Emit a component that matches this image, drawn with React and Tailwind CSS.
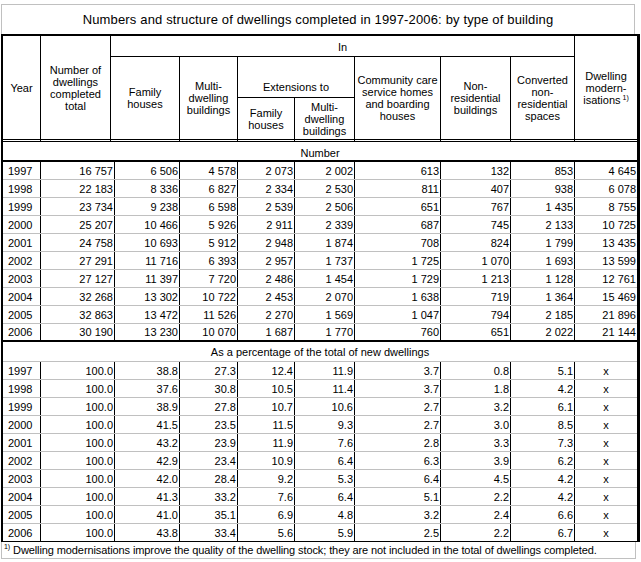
import React from "react";

const numbers = [
  ["1997", "16 757", "6 506", "4 578", "2 073", "2 002", "613", "132", "853", "4 645"],
  ["1998", "22 183", "8 336", "6 827", "2 334", "2 530", "811", "407", "938", "6 078"],
  ["1999", "23 734", "9 238", "6 598", "2 539", "2 506", "651", "767", "1 435", "8 755"],
  ["2000", "25 207", "10 466", "5 926", "2 911", "2 339", "687", "745", "2 133", "10 725"],
  ["2001", "24 758", "10 693", "5 912", "2 948", "1 874", "708", "824", "1 799", "13 435"],
  ["2002", "27 291", "11 716", "6 393", "2 957", "1 737", "1 725", "1 070", "1 693", "13 599"],
  ["2003", "27 127", "11 397", "7 720", "2 486", "1 454", "1 729", "1 213", "1 128", "12 761"],
  ["2004", "32 268", "13 302", "10 722", "2 453", "2 070", "1 638", "719", "1 364", "15 469"],
  ["2005", "32 863", "13 472", "11 526", "2 270", "1 569", "1 047", "794", "2 185", "21 896"],
  ["2006", "30 190", "13 230", "10 070", "1 687", "1 770", "760", "651", "2 022", "21 144"],
];

const percents = [
  ["1997", "100.0", "38.8", "27.3", "12.4", "11.9", "3.7", "0.8", "5.1", "x"],
  ["1998", "100.0", "37.6", "30.8", "10.5", "11.4", "3.7", "1.8", "4.2", "x"],
  ["1999", "100.0", "38.9", "27.8", "10.7", "10.6", "2.7", "3.2", "6.1", "x"],
  ["2000", "100.0", "41.5", "23.5", "11.5", "9.3", "2.7", "3.0", "8.5", "x"],
  ["2001", "100.0", "43.2", "23.9", "11.9", "7.6", "2.8", "3.3", "7.3", "x"],
  ["2002", "100.0", "42.9", "23.4", "10.9", "6.4", "6.3", "3.9", "6.2", "x"],
  ["2003", "100.0", "42.0", "28.4", "9.2", "5.3", "6.4", "4.5", "4.2", "x"],
  ["2004", "100.0", "41.3", "33.2", "7.6", "6.4", "5.1", "2.2", "4.2", "x"],
  ["2005", "100.0", "41.0", "35.1", "6.9", "4.8", "3.2", "2.4", "6.6", "x"],
  ["2006", "100.0", "43.8", "33.4", "5.6", "5.9", "2.5", "2.2", "6.7", "x"],
];

// header columns and data columns (the data grid's second rule sits 4px further right)
const headCols = "grid grid-cols-[38px_70px_69px_58px_57px_60px_86px_70px_64px_62px]";
const dataCols = "grid grid-cols-[38px_74px_65px_58px_57px_60px_86px_70px_64px_62px]";

const hd = "flex items-center justify-center text-center leading-[12px] border-black border-r";
const hdBottom = "border-double border-b-[3px]";

const DataRow = ({ row, last, pct }) => (
  <div
    className={`${dataCols} h-[18px] ${
      last ? (pct ? "border-b border-black" : "border-b-2 border-black") : "border-b border-[#c0c0c0]"
    }`}
  >
    {row.map((v, i) => (
      <div
        key={i}
        className={`flex items-end pb-[1px] leading-[13px] ${
          i === 0 ? "pl-[5px]" : i === 9 && pct ? "justify-center" : "justify-end pr-[1px]"
        } ${i < 9 ? "border-r border-black" : ""}`}
      >
        {v}
      </div>
    ))}
  </div>
);

export default function App() {
  return (
    <div className="w-[641px] h-[562px] bg-white text-black font-['Liberation_Sans',Arial,sans-serif] text-[11px] pt-[4px]">
      {/* Title */}
      <div className="ml-[1px] w-[634px] h-[30px] border-t border-x border-[#c0c0c0] flex items-center justify-center pt-[1px] text-[13px] tracking-[0.15px]">
        Numbers and structure of dwellings completed in 1997-2006: by type of building
      </div>

      <div className="ml-[1px] w-[639px] border-t-2 border-l-2 border-r-[3px] border-black">
        {/* Header */}
        <div className={`${headCols} grid-rows-[21px_41px_44px]`}>
          <div className={`${hd} ${hdBottom} row-span-3`}>Year</div>
          <div className={`${hd} ${hdBottom} row-span-3`}>
            Number of<br />dwellings<br />completed<br />total
          </div>
          <div className={`${hd} col-span-7 border-b pt-[2px]`}>In</div>
          <div className={`${hd} ${hdBottom} row-span-3 border-r-0`}>
            <span>
              Dwelling<br />modern-<br />isations<sup className="text-[7px] ml-[2px] -top-[4px]">1)</sup>
            </span>
          </div>
          <div className={`${hd} ${hdBottom} row-span-2`}>
            Family<br />houses
          </div>
          <div className={`${hd} ${hdBottom} row-span-2`}>
            Multi-<br />dwelling<br />buildings
          </div>
          <div className={`${hd} col-span-2 border-b items-end pb-[4px]`}>Extensions to</div>
          <div className={`${hd} ${hdBottom} row-span-2`}>
            Community care<br />service homes<br />and boarding<br />houses
          </div>
          <div className={`${hd} ${hdBottom} row-span-2`}>
            Non-<br />residential<br />buildings
          </div>
          <div className={`${hd} ${hdBottom} row-span-2`}>
            Converted<br />non-<br />residential<br />spaces
          </div>
          <div className={`${hd} ${hdBottom}`}>
            Family<br />houses
          </div>
          <div className={`${hd} ${hdBottom}`}>
            Multi-<br />dwelling<br />buildings
          </div>
        </div>

        {/* Number section */}
        <div className="h-[20px] border-b-2 border-black flex items-end justify-center pb-[0px] leading-[13px]">
          Number
        </div>
        {numbers.map((r, i) => (
          <DataRow key={r[0]} row={r} last={i === numbers.length - 1} />
        ))}

        {/* Percentage section */}
        <div className="h-[20px] border-b border-[#c0c0c0] flex items-end justify-center pb-[2px] leading-[13px]">
          As a percentage of the total of new dwellings
        </div>
        {percents.map((r, i) => (
          <DataRow key={r[0]} row={r} last={i === percents.length - 1} pct />
        ))}
      </div>

      {/* Footnote */}
      <div className="ml-[1px] w-[635px] h-[17px] border-x border-b border-[#c0c0c0] flex items-center pl-[2px] leading-[13px] tracking-[-0.1px]">
        <sup className="text-[7px] -top-[3px] mr-[3px]">1)</sup>
        Dwelling modernisations improve the quality of the dwelling stock; they are not included in the total of
        dwellings completed.
      </div>
    </div>
  );
}
